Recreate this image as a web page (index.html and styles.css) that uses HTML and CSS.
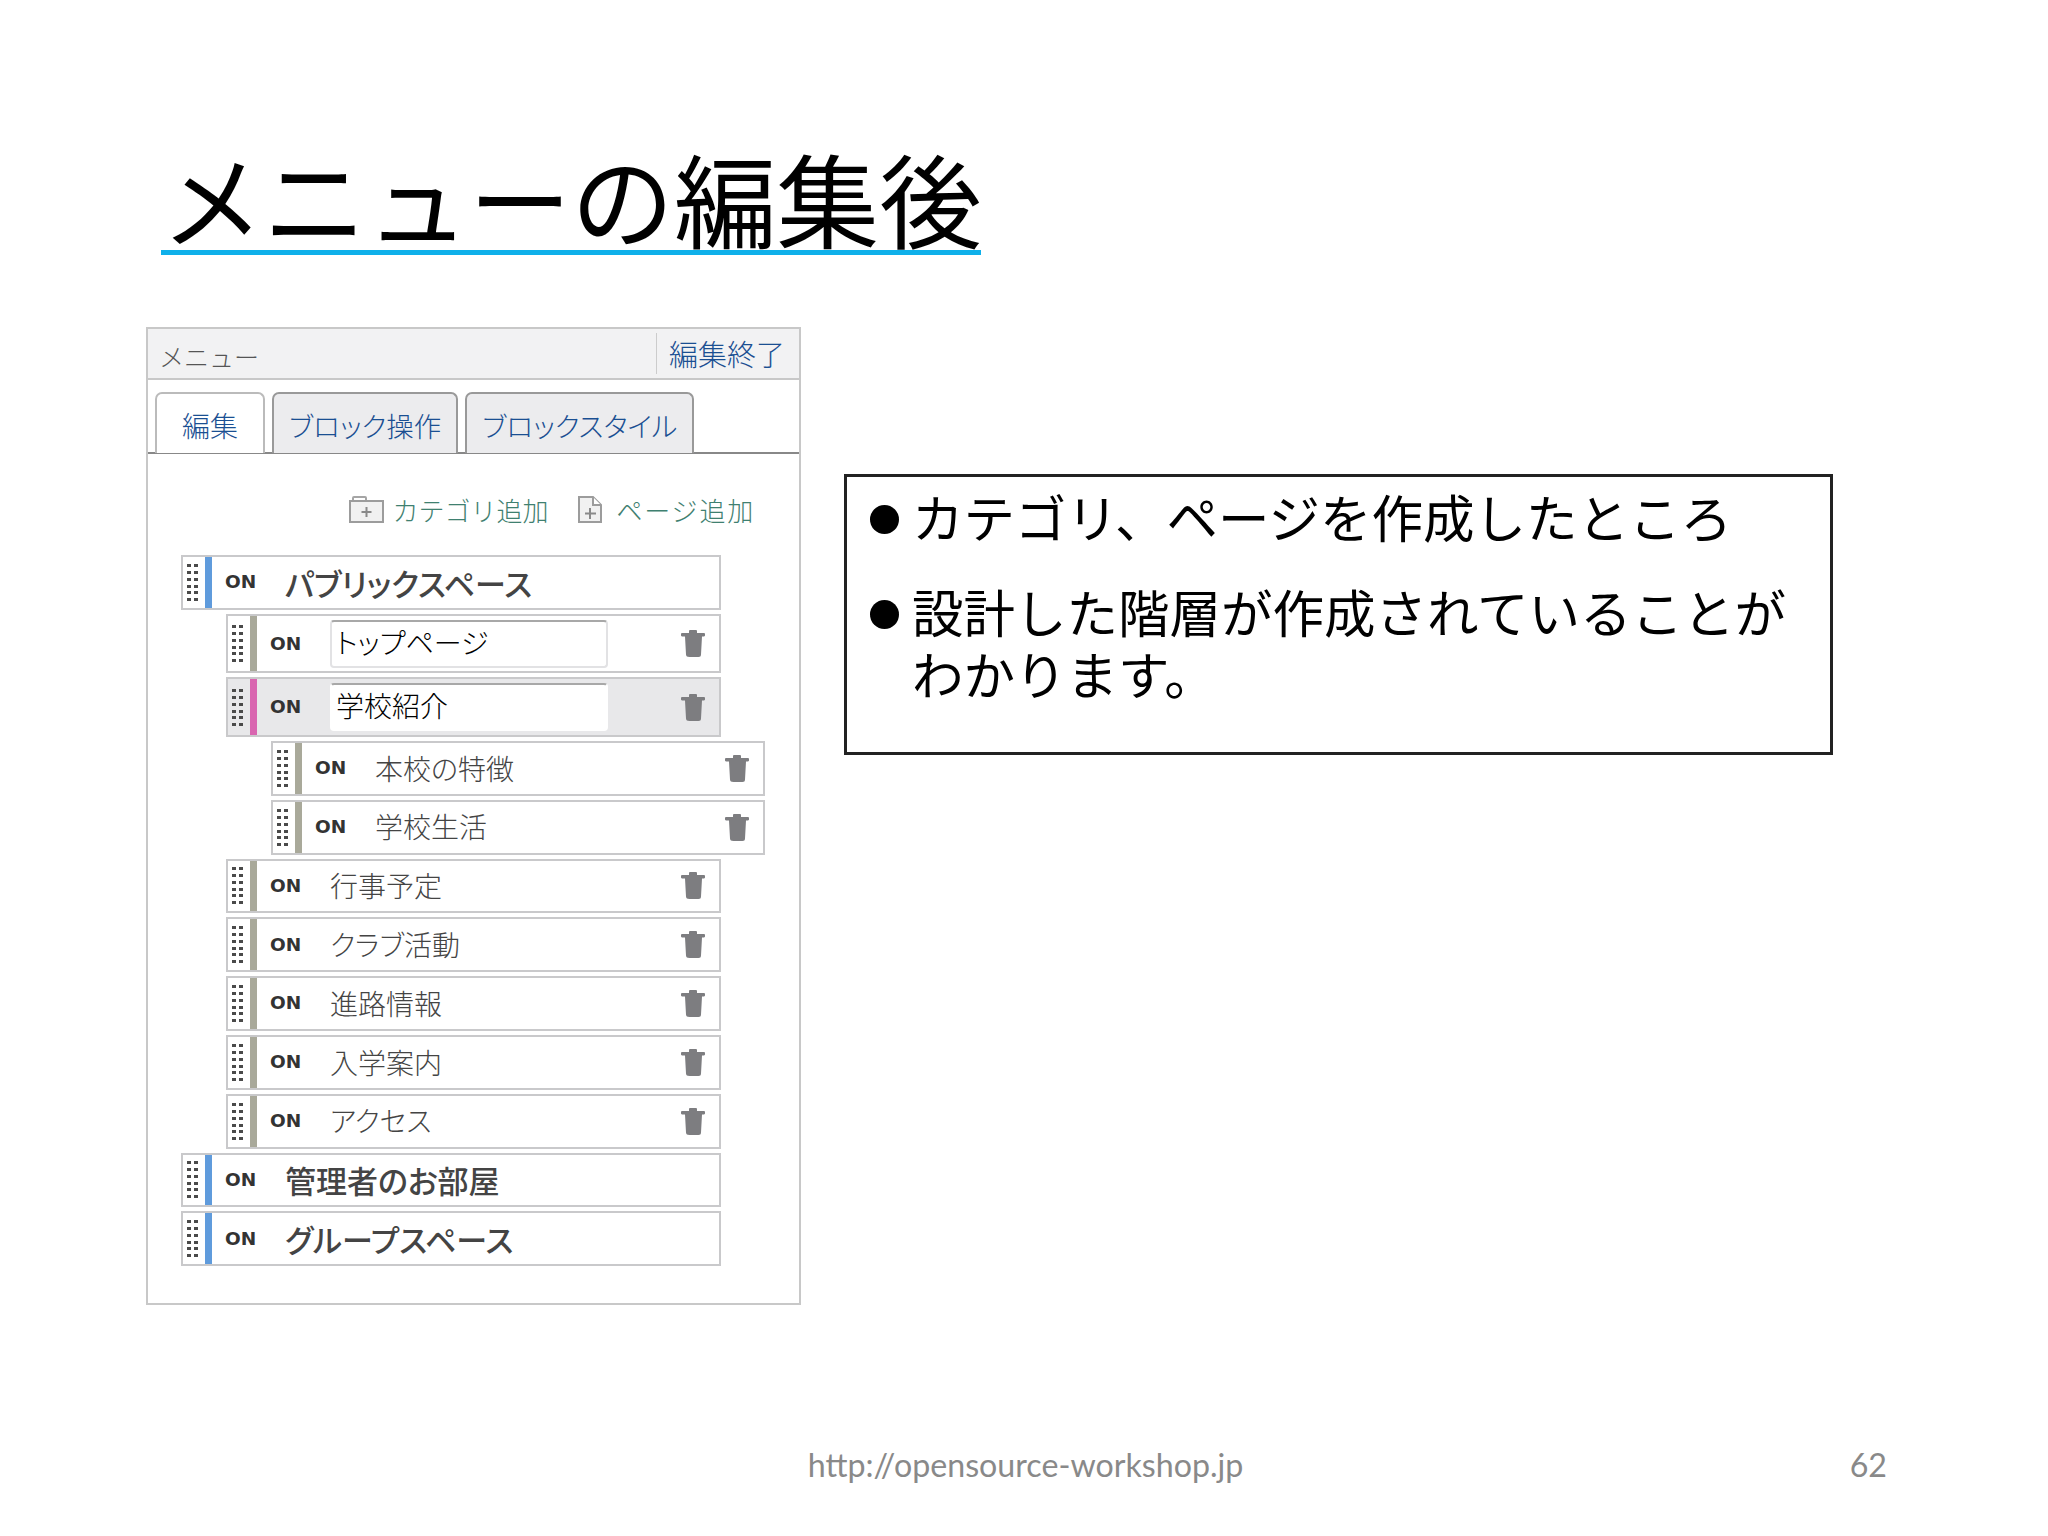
FILE: index.html
```html
<!DOCTYPE html>
<html lang="ja">
<head>
  <meta charset="utf-8">
  <title>メニューの編集後</title>
  <link rel="stylesheet" href="styles.css">
</head>
<body>
  <svg class="defs" width="0" height="0" aria-hidden="true">
    <symbol id="grip" viewBox="0 0 12 37">
      <path d="M0 0h4v3H0zM7 0h4v3H7zM0 7h4v3H0zM7 7h4v3H7zM0 14h4v3H0zM7 14h4v3H7zM0 21h4v3H0zM7 21h4v3H7zM0 27h4v3H0zM7 27h4v3H7zM0 34h4v3H0zM7 34h4v3H7z"/>
    </symbol>
    <symbol id="trash" viewBox="0 0 24 27">
      <path d="M8 1q0-1 1-1h6q1 0 1 1v2h7q1 0 1 1v1.500q0 .5-1 1h-2l-1 18q0 2.500-2.500 2.500h-9Q5 27 5 24.500l-1-18H1q-1-.5-1-1V4q0-1 1-1h7z"/>
    </symbol>
  </svg>

  <div class="slide">
    <h1 class="title">メニューの編集後</h1>

    <div class="content">
      <section class="panel">
        <header class="panel-head">
          <span class="panel-name">メニュー</span>
          <a class="panel-done">編集終了</a>
        </header>

        <nav class="tabs">
          <a class="tab active">編集</a>
          <a class="tab">ブロック操作</a>
          <a class="tab">ブロックスタイル</a>
        </nav>

        <div class="tools">
          <a class="tool">
            <svg width="35" height="27" viewBox="0 0 35 27">
              <path d="M4 5V2q0-1 1-1h11q1 0 1 1v3" fill="none" stroke="#a5a5a5" stroke-width="2"/>
              <rect x="1" y="5" width="33" height="21" fill="#f1f1f1" stroke="#9c9c9c" stroke-width="2"/>
              <path d="M17.500 11v10M12.500 16h10" stroke="#8a8a8a" stroke-width="2"/>
            </svg>
            カテゴリ追加
          </a>
          <a class="tool tool-page">
            <svg width="24" height="27" viewBox="0 0 24 27">
              <path d="M1 1h14l8 8v17H1z" fill="#f1f1f1" stroke="#9c9c9c" stroke-width="2"/>
              <path d="M15 1v8h8" fill="#fff" stroke="#9c9c9c" stroke-width="2"/>
              <path d="M12 12v11M7 17.500h11" stroke="#8a8a8a" stroke-width="2"/>
            </svg>
            ページ追加
          </a>
        </div>

        <div class="tree">
          <div class="row top">
            <svg class="grip"><use href="#grip"/></svg><i class="bar"></i>
            <b class="on">ON</b><span class="name">パブリックスペース</span>
          </div>
          <div class="row sub tall">
            <svg class="grip"><use href="#grip"/></svg><i class="bar"></i>
            <b class="on">ON</b><span class="name-box">トップページ</span>
            <svg class="trash"><use href="#trash"/></svg>
          </div>
          <div class="row sub tall selected">
            <svg class="grip"><use href="#grip"/></svg><i class="bar"></i>
            <b class="on">ON</b><span class="name-box">学校紹介</span>
            <svg class="trash"><use href="#trash"/></svg>
          </div>
          <div class="row leaf">
            <svg class="grip"><use href="#grip"/></svg><i class="bar"></i>
            <b class="on">ON</b><span class="name">本校の特徴</span>
            <svg class="trash"><use href="#trash"/></svg>
          </div>
          <div class="row leaf">
            <svg class="grip"><use href="#grip"/></svg><i class="bar"></i>
            <b class="on">ON</b><span class="name">学校生活</span>
            <svg class="trash"><use href="#trash"/></svg>
          </div>
          <div class="row sub">
            <svg class="grip"><use href="#grip"/></svg><i class="bar"></i>
            <b class="on">ON</b><span class="name">行事予定</span>
            <svg class="trash"><use href="#trash"/></svg>
          </div>
          <div class="row sub">
            <svg class="grip"><use href="#grip"/></svg><i class="bar"></i>
            <b class="on">ON</b><span class="name">クラブ活動</span>
            <svg class="trash"><use href="#trash"/></svg>
          </div>
          <div class="row sub">
            <svg class="grip"><use href="#grip"/></svg><i class="bar"></i>
            <b class="on">ON</b><span class="name">進路情報</span>
            <svg class="trash"><use href="#trash"/></svg>
          </div>
          <div class="row sub">
            <svg class="grip"><use href="#grip"/></svg><i class="bar"></i>
            <b class="on">ON</b><span class="name">入学案内</span>
            <svg class="trash"><use href="#trash"/></svg>
          </div>
          <div class="row sub">
            <svg class="grip"><use href="#grip"/></svg><i class="bar"></i>
            <b class="on">ON</b><span class="name">アクセス</span>
            <svg class="trash"><use href="#trash"/></svg>
          </div>
          <div class="row top">
            <svg class="grip"><use href="#grip"/></svg><i class="bar"></i>
            <b class="on">ON</b><span class="name">管理者のお部屋</span>
          </div>
          <div class="row top">
            <svg class="grip"><use href="#grip"/></svg><i class="bar"></i>
            <b class="on">ON</b><span class="name">グループスペース</span>
          </div>
        </div>
      </section>

      <ul class="notes">
        <li>カテゴリ、ページを作成したところ</li>
        <li>設計した階層が作成されていることがわかります。</li>
      </ul>
    </div>

    <footer class="foot">
      <span></span>
      <span class="foot-url">http://opensource-workshop.jp</span>
      <span class="foot-page">62</span>
    </footer>
  </div>
</body>
</html>
```

FILE: styles.css
```css
body {
  margin: 0;
  background: #fff;
  color: #000;
  font-family: "Noto Sans CJK JP", sans-serif;
}
.defs {
  position: absolute;
}
.slide {
  height: 1536px;
  display: flex;
  flex-direction: column;
  padding: 0 161px 0 146px;
  box-sizing: border-box;
}

.title {
  margin: 133px 0 72px 15px;
  width: 820px;
  height: 117px;
  border-bottom: 5px solid #0fb0ea;
  font-size: 102.600px;
  font-weight: 400;
  line-height: 128px;
  white-space: nowrap;
  box-sizing: content-box;
}

.content {
  display: flex;
  align-items: flex-start;
  gap: 43px;
}

/* menu panel */
.panel {
  width: 655px;
  height: 978px;
  box-sizing: border-box;
  border: 2px solid #c8c8c8;
  font-size: 27.500px;
  font-feature-settings: "palt";
  line-height: 1.2;
}
.panel-head {
  height: 51px;
  box-sizing: border-box;
  display: flex;
  justify-content: space-between;
  align-items: center;
  padding: 4px 14px 4px 11px;
  background: #f2f2f3;
  border-bottom: 2px solid #c8c8c8;
}
.panel-name {
  color: #555;
  font-size: 25px;
  font-weight: 300;
  font-feature-settings: normal;
  margin-top: 4px;
}
.panel-done {
  align-self: stretch;
  display: flex;
  align-items: center;
  padding-left: 12px;
  border-left: 1px solid #ccc;
  color: #1a4f92;
  font-size: 29px;
  font-weight: 300;
}

.tabs {
  display: flex;
  gap: 7px;
  height: 74px;
  box-sizing: border-box;
  padding: 12px 0 0 7px;
  border-bottom: 2px solid #888;
}
.tab {
  height: 61px;
  box-sizing: border-box;
  padding: 15px 15px 0;
  border: 2px solid #999;
  border-bottom: 0;
  border-radius: 7px 7px 0 0;
  background: #ececee;
  color: #1a4f92;
  font-weight: 300;
}
.tab.active {
  padding: 15px 25px 0;
  border-color: #bbb;
  background: #fff;
  font-size: 28px;
}

.tools {
  display: flex;
  justify-content: flex-end;
  align-items: flex-end;
  gap: 29px;
  margin-top: 40px;
  padding-right: 44px;
}
.tool {
  display: flex;
  align-items: center;
  gap: 9px;
  color: #3f8070;
  font-size: 26px;
  font-weight: 300;
  font-feature-settings: normal;
}
.tool-page {
  gap: 15px;
  letter-spacing: 1.800px;
}

/* rows of the page tree */
.tree {
  display: flex;
  flex-direction: column;
  gap: 4px;
  margin: 30px 0 0 33px;
}
.row {
  display: flex;
  align-items: center;
  height: 54.800px;
  box-sizing: border-box;
  border: 2px solid #c9c9cb;
  color: #444;
  font-size: 28px;
  font-weight: 300;
  background: #fff;
}
.row.top {
  width: 540px;
}
.row.sub {
  width: 495px;
  margin-left: 45px;
}
.row.leaf {
  width: 494px;
  margin-left: 90px;
}
.row.tall {
  height: 59.500px;
}
.row.selected {
  background: #e8e8ea;
}
.grip {
  flex: none;
  width: 12px;
  height: 37px;
  margin: 0 6px 0 4px;
  fill: #4a4a4a;
}
.bar {
  flex: none;
  align-self: stretch;
  width: 7px;
  background: #a9a99a;
}
.row.top .bar {
  background: #5f9bdc;
}
.row.selected .bar {
  background: #d966b0;
}
.on {
  flex: none;
  width: 60px;
  margin-left: 13px;
  color: #333;
  font-family: "DejaVu Sans", sans-serif;
  font-size: 18.500px;
  font-weight: 700;
  font-feature-settings: normal;
}
.name {
  flex: 1;
}
.row.top .name {
  font-size: 31px;
  font-weight: 500;
}
.name-box {
  flex: none;
  width: 278px;
  height: 48px;
  box-sizing: border-box;
  margin-right: 73px;
  padding-left: 4px;
  border: 2px solid #e2e2e4;
  border-top-color: #a8a8a8;
  border-radius: 4px;
  background: #fff;
  color: #000;
  line-height: 40px;
  white-space: nowrap;
}
.row.selected .name-box {
  border-color: #fff;
  border-top-color: #a8a8a8;
}
.trash {
  flex: none;
  width: 24px;
  height: 27px;
  margin-right: 14px;
  fill: #7d7d80;
}

/* text box on the right */
.notes {
  flex: none;
  width: 989px;
  height: 281px;
  box-sizing: border-box;
  margin: 147px 0 0;
  padding: 8px 0 0 23px;
  border: 3px solid #222;
  list-style: none;
  font-size: 51.500px;
  line-height: 62px;
}
.notes li {
  display: flex;
  gap: 13px;
}
.notes li + li {
  margin-top: 33px;
}
.notes li::before {
  content: "";
  flex: none;
  width: 29px;
  height: 29px;
  margin-top: 20px;
  border-radius: 50%;
  background: #000;
}

.foot {
  display: grid;
  grid-template-columns: 1fr auto 1fr;
  margin: auto 0 0 18px;
  padding-bottom: 51px;
  color: #898989;
  font-family: Lato, sans-serif;
  font-size: 32.200px;
  line-height: 40px;
}
.foot-page {
  justify-self: end;
}
```
